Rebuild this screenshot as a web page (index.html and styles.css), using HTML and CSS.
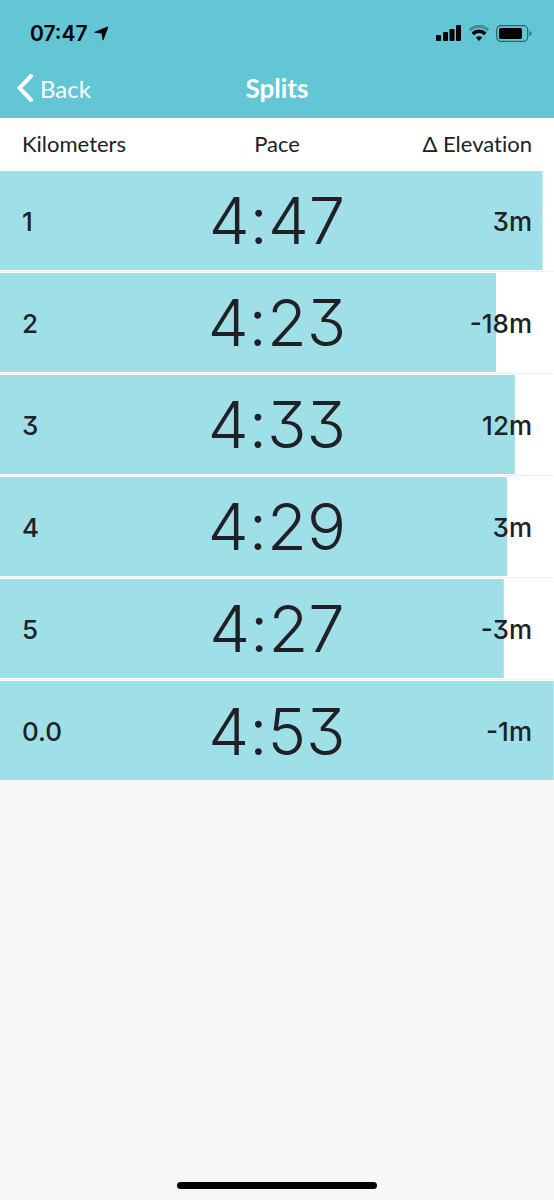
FILE: index.html
```html
<!DOCTYPE html>
<html lang="en">
<head>
<meta charset="utf-8">
<meta name="viewport" content="width=device-width, initial-scale=1">
<title>Splits</title>
<link rel="stylesheet" href="styles.css">
</head>
<body>
<div class="screen">
  <header class="top">
    <div class="status">
      <div class="clock">
        <span>07:47</span>
        <svg width="15" height="15" viewBox="0 0 15 15" aria-hidden="true"><path d="M13.600.6q1-.3.7.7L9.500 13.800q-.6 1.100-1.100 0L7.600 7.500 1 6.800q-1.200-.5 0-1.100z"/></svg>
      </div>
      <div class="indicators">
        <svg width="26" height="16" viewBox="0 0 26 16" aria-hidden="true"><rect x="0" y="10" width="5" height="6" rx="1"/><rect x="7" y="7" width="5" height="9" rx="1"/><rect x="13.500" y="4" width="5" height="12" rx="1"/><rect x="20" y="0" width="5" height="16" rx="1"/></svg>
        <svg width="20" height="16" viewBox="0 0 20 16" fill="none" stroke="#000" aria-hidden="true"><path d="M.8 5.200C6-.2 14-.2 19.200 5.200" stroke-width="3" opacity=".3"/><path d="M3.800 9C7.300 5.400 12.700 5.400 16.200 9" stroke-width="3.400"/><path d="M6.800 12.600Q10 9.800 13.200 12.600L10 16z" fill="#000" stroke="none"/></svg>
        <svg width="36" height="17" viewBox="0 0 36 17" aria-hidden="true"><rect x=".7" y=".7" width="31" height="15.600" rx="4" fill="none" stroke="#000" stroke-opacity=".5" stroke-width="1.200"/><rect x="3" y="3" width="23" height="11" rx="1.500"/><path d="M33.500 6q2 .5 2 2.500t-2 2.500z" opacity=".5"/></svg>
      </div>
    </div>
    <nav class="nav">
      <button class="back" type="button">
        <svg width="18" height="30" viewBox="0 0 18 30" fill="none" stroke="#fff" stroke-width="4" stroke-linecap="round" aria-hidden="true"><path d="M15 3 3.500 15 15 27"/></svg>
        <span>Back</span>
      </button>
      <h1 class="title">Splits</h1>
    </nav>
  </header>
  <main class="content">
    <table class="splits">
      <thead>
        <tr><th scope="col">Kilometers</th><th scope="col">Pace</th><th scope="col">Δ Elevation</th></tr>
      </thead>
      <tbody>
        <tr style="--bar: 98%"><td>1</td><td>4:47</td><td>3m</td></tr>
        <tr style="--bar: 89.600%"><td>2</td><td>4:23</td><td>-18m</td></tr>
        <tr style="--bar: 93%"><td>3</td><td>4:33</td><td>12m</td></tr>
        <tr style="--bar: 91.600%"><td>4</td><td>4:29</td><td>3m</td></tr>
        <tr style="--bar: 91%"><td>5</td><td>4:27</td><td>-3m</td></tr>
        <tr style="--bar: 100%"><td>0.0</td><td>4:53</td><td>-1m</td></tr>
      </tbody>
    </table>
  </main>
  <footer class="home"><div class="home-bar"></div></footer>
</div>
</body>
</html>
```
FILE: styles.css
```css
* { box-sizing: border-box; }
body {
  margin: 0;
  background: #f7f7f7;
  color: #202124;
  font-family: Inter, "Liberation Sans", sans-serif;
}
.screen {
  min-height: 100vh;
  display: flex;
  flex-direction: column;
}
.top { background: #62c6d5; }
.status {
  display: flex;
  justify-content: space-between;
  align-items: center;
  height: 60px;
  padding: 6px 22px 0 30px;
  color: #000;
}
.clock {
  display: flex;
  align-items: center;
  gap: 6px;
  font-size: 21px;
  font-weight: 600;
}
.indicators { display: flex; align-items: center; gap: 7px; }
.nav {
  display: grid;
  grid-template-columns: 1fr auto 1fr;
  align-items: center;
  height: 58px;
  padding: 0 16px 2px;
  color: #fff;
}
.back {
  display: flex;
  align-items: center;
  justify-self: start;
  gap: 6px;
  padding: 0;
  border: 0;
  background: none;
  color: inherit;
  font-family: Lato, sans-serif;
  font-size: 24px;
}
.title {
  margin: 0;
  font-family: Lato, sans-serif;
  font-size: 26px;
  font-weight: 700;
}
.content { flex: 1; }
.splits {
  width: 100%;
  table-layout: fixed;
  border-spacing: 0;
  background: #fff;
}
.splits th {
  height: 53px;
  padding: 0 22px 2px;
  font-family: Lato, sans-serif;
  font-size: 22px;
  font-weight: 400;
  font-variant-ligatures: none;
  text-align: left;
}
.splits td {
  height: 102px;
  padding: 0 22px 1px;
  font-size: 26px;
  font-weight: 500;
  font-feature-settings: "cv09" 1;
}
.splits th:nth-child(2),
.splits td:nth-child(2) { padding-left: 0; padding-right: 0; text-align: center; }
.splits th:nth-child(3),
.splits td:nth-child(3) { padding-left: 0; text-align: right; }
.splits td:nth-child(2) {
  padding-bottom: 3px;
  font-size: 65px;
  font-weight: 350;
  font-feature-settings: "cv09" 1, "calt" 0;
}
.splits tbody tr {
  background-image: linear-gradient(#9fdfe7, #9fdfe7), linear-gradient(#f0f0f0, #f0f0f0);
  background-size: var(--bar) 99px, 100% 1px;
  background-position: 0 0, 0 100px;
  background-repeat: no-repeat;
}
.splits tbody tr:last-child td { height: 100px; padding-bottom: 0; }
.home { display: flex; justify-content: center; padding-bottom: 11px; }
.home-bar {
  width: 36%;
  height: 7px;
  border-radius: 4px;
  background: #000;
}
```
